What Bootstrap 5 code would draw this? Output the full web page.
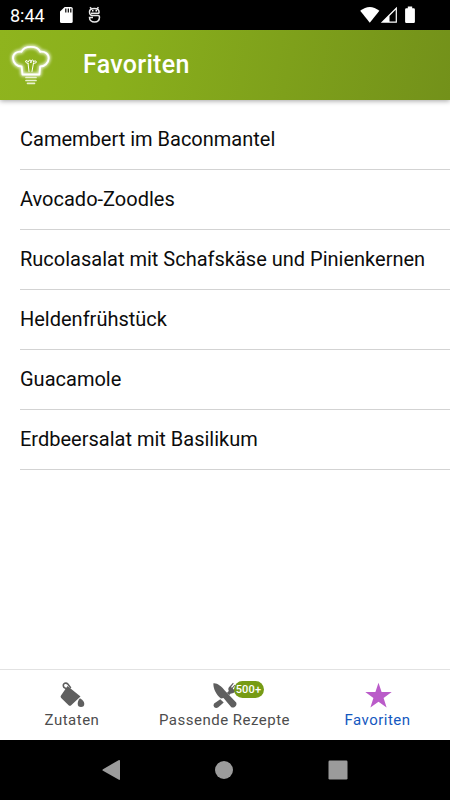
<!DOCTYPE html>
<html lang="de">
<head>
<meta charset="utf-8">
<meta name="viewport" content="width=device-width, initial-scale=1">
<title>Favoriten</title>
<link href="https://cdn.jsdelivr.net/npm/bootstrap@5.3.0/dist/css/bootstrap.min.css" rel="stylesheet">
<style>
body{font-family:Roboto,"Liberation Sans",sans-serif;height:800px;overflow:hidden;background:#fff;color:#0c0c0c}
svg{display:block;flex:none}
.statusbar{height:30px;background:#000;color:#fff;padding-left:10px;padding-right:35px}
.clock{font-size:18px;line-height:30px;width:49px;padding-top:1px}
.appbar{height:70px;background:linear-gradient(100deg,#8fb41e 0%,#8ab01c 25%,#73911a 100%);box-shadow:0 1px 5px rgba(0,0,0,.36);color:#fff}
.appbar h1{font-size:25px;font-weight:500;letter-spacing:.3px;line-height:30px;margin-left:32px}
.logo{margin-left:10px}
.recipes{padding:10px 0 0 20px}
.recipes .list-group-item{height:60px;padding:0;border-color:#d3d3d3;color:#0c0c0c;font-size:20px;line-height:59px;white-space:nowrap;background:transparent}
.recipes .list-group-item:last-child{border-bottom-width:1px}
.tabs{height:71px;border-top:1px solid #e2e2e2;background:#fff}
.tabs a{color:#4d4d4d;text-decoration:none;font-size:15px;line-height:20px;letter-spacing:.5px;padding-top:10px;white-space:nowrap}
.tabs a.active{color:#1458c0}
.tab-side{width:144px}
.tab-last{width:145px}
.count{position:absolute;left:24px;top:1px;width:30px;height:17px;border-radius:9px;background:#769b15;color:#fff;font-size:11px;font-weight:500;line-height:17px;letter-spacing:.2px;text-align:center}
.sysnav{height:60px;background:#000;padding:0 102px}
</style>
<script src="https://cdn.jsdelivr.net/npm/bootstrap@5.3.0/dist/js/bootstrap.bundle.min.js"></script>
</head>
<body class="d-flex flex-column">
<div class="statusbar d-flex align-items-center">
  <span class="clock">8:44</span>
  <svg width="44" height="20" viewBox="59 5 44 20">
    <path d="M64.7 7H71q1.7 0 1.7 1.5v13q0 1.5-1.5 1.5h-9.700q-1.500 0-1.500-1.500V11.500Z" fill="#fff"/>
    <path d="M65.800 8.600v3.800M68.300 8.600v3.800M70.800 8.600v3.800" stroke="#000" stroke-width="1.200"/>
    <g fill="none" stroke="#e8e8e8" stroke-width="1.500"><path d="M90 7.200l1.500 1.600M98.500 7.200L97 8.800"/><path d="M99 13.500v-1.700c0-2-2-3.300-4.700-3.300s-4.800 1.300-4.800 3.300c0 2.500 1 3.700 3 3.700h5.500q1.500 0 1.500 1.500c0 3-2 5-5 5s-5-2-5-4.500h3.500"/><path d="M91 13.300h8"/></g>
    <path d="M92 10.700h1.500M95.500 10.700H97" stroke="#fff" stroke-width="1.500"/>
  </svg>
  <svg class="ms-auto" width="55" height="20" viewBox="360 5 55 20" fill="#fff">
    <path d="M360.200 10.800q9.600-7.600 19.200 0L369.800 22.800Z"/>
    <path d="M380.800 22.800L396.900 6.800V22.800ZM389.500 16V21.600H395.700V9.700Z" fill-rule="evenodd"/>
    <path d="M407.800 6.500h4.400v1.700h1.500q1.200 0 1.200 1.200v12.400q0 1.200-1.200 1.200h-7.400q-1.200 0-1.200-1.200V9.400q0-1.200 1.200-1.200h1.500z"/>
  </svg>
</div>
<header class="appbar d-flex align-items-center">
  <svg class="logo overflow-visible" width="41" height="44" viewBox="10 46 41 44" fill="none" stroke="#fff" stroke-linecap="round" stroke-linejoin="round">
    <defs><filter id="glow" x="-40%" y="-40%" width="180%" height="180%"><feGaussianBlur stdDeviation="1.800"/></filter></defs>
    <path d="M22.500 77.500L21.600 69.500C17 69.500 13.300 66 13 61.500C12.800 56.500 17 54.200 21.500 54.700C24.500 48.200 37 48.200 40.300 54.700C45 54.200 49 57.200 48.700 61.500C48.500 66 44.500 69.500 40.200 69.500L39.400 77.500Z" stroke-width="4" opacity=".75" filter="url(#glow)"/>
    <path d="M22.500 77.500L21.600 69.500C17 69.500 13.300 66 13 61.500C12.800 56.500 17 54.200 21.500 54.700C24.500 48.200 37 48.200 40.300 54.700C45 54.200 49 57.200 48.700 61.500C48.500 66 44.500 69.500 40.200 69.500L39.400 77.500Z" stroke-width="1.900"/>
    <path d="M29 74.500L28 66M32 74.500L33.500 66" stroke-width="1"/>
    <path d="M28 66.500q-2.800-.5-2.500-2.500 1.600-1.500 2.800 1 .6-2.500 2-2t.5 3q0-3 1.500-3t1.200 2q1.500-2.200 2.800-.6t-2.800 2.100" stroke-width="1"/>
    <path d="M26 80.500h10M26 83.500h10M27.500 86.300h7" stroke="#e9f1cf" stroke-width="1.700"/>
  </svg>
  <h1 class="mb-0">Favoriten</h1>
</header>
<main class="recipes flex-grow-1">
  <ul class="list-group list-group-flush">
    <li class="list-group-item">Camembert im Baconmantel</li>
    <li class="list-group-item">Avocado-Zoodles</li>
    <li class="list-group-item">Rucolasalat mit Schafskäse und Pinienkernen</li>
    <li class="list-group-item">Heldenfrühstück</li>
    <li class="list-group-item">Guacamole</li>
    <li class="list-group-item">Erdbeersalat mit Basilikum</li>
  </ul>
</main>
<nav class="tabs d-flex">
  <a href="#" class="tab-side d-flex flex-column align-items-center">
    <svg width="30" height="30" viewBox="57 680 30 30" fill="#5f5f5f">
      <path d="M67.500 686L80.500 696.500L71.200 705.200q-1.300 1-2.600 0L61.200 698q-1.200-1.300-.2-2.500Z"/>
      <path d="M69.500 690.500L64 687.500q-1.800-3 .8-4.200 1.700-.7 3 .8l3 3.800" fill="none" stroke="#5f5f5f" stroke-width="1.600"/>
      <path d="M80 698.200C82.500 699.500 84.300 701.800 84.300 703.800A3.300 3.300 0 0 1 77.700 703.800C77.700 701.800 78.300 700 80 698.200Z"/>
    </svg>
    <span>Zutaten</span>
  </a>
  <a href="#" class="flex-grow-1 d-flex flex-column align-items-center">
    <span class="position-relative d-block">
      <svg width="30" height="30" viewBox="209 680 30 30" fill="#5f5f5f">
        <path d="M212.400 683.200C216 682.600 220.500 686.200 224 690.700L235.200 702.500q1 2.500-1.500 4.500-2.300 1.300-3.800-.3L222.500 698l-2.500.5C215 694.500 212 688 212.400 683.200Z"/>
        <path d="M219.300 699.200L222.700 702.600L217.300 707.200q-2.300 1.500-4.200-.3-1.300-1.700 0-3.300Z"/>
        <path d="M225.800 693l2-2q-1.300-2.700.8-4.500L232 682.700l.7.700-2.600 3.500.8.800 2.800-3 .6.600-2.600 3.300.8.800 2.500-2-.3 3.700q-2.300 3-4.900 2.300l-1.500 1.600z"/>
      </svg>
      <span class="count">500+</span>
    </span>
    <span>Passende Rezepte</span>
  </a>
  <a href="#" class="tab-last active d-flex flex-column align-items-center">
    <svg width="30" height="30" viewBox="362 680 30 30"><path d="M377.500 682.700L380.600 692.100H390.700L382.600 698.100L385.600 707.500L377.500 701.700L369.400 707.500L372.400 698.100L364.300 692.100H374.400Z" fill="#ba5bc9"/></svg>
    <span>Favoriten</span>
  </a>
</nav>
<div class="sysnav d-flex align-items-center justify-content-between">
  <svg width="18" height="22" viewBox="0 0 18 22"><path d="M1 10.200L16.500 1.200Q18 .5 18 2V20Q18 21.500 16.500 20.600L1 11.800Q-.2 11 1 10.200Z" fill="#9b9b9b"/></svg>
  <svg width="18" height="18" viewBox="0 0 18 18"><circle cx="9" cy="9" r="9" fill="#9b9b9b"/></svg>
  <svg width="20" height="20" viewBox="0 0 20 20"><rect x=".5" y=".5" width="19" height="19" rx="1.200" fill="#9b9b9b"/></svg>
</div>
</body>
</html>
